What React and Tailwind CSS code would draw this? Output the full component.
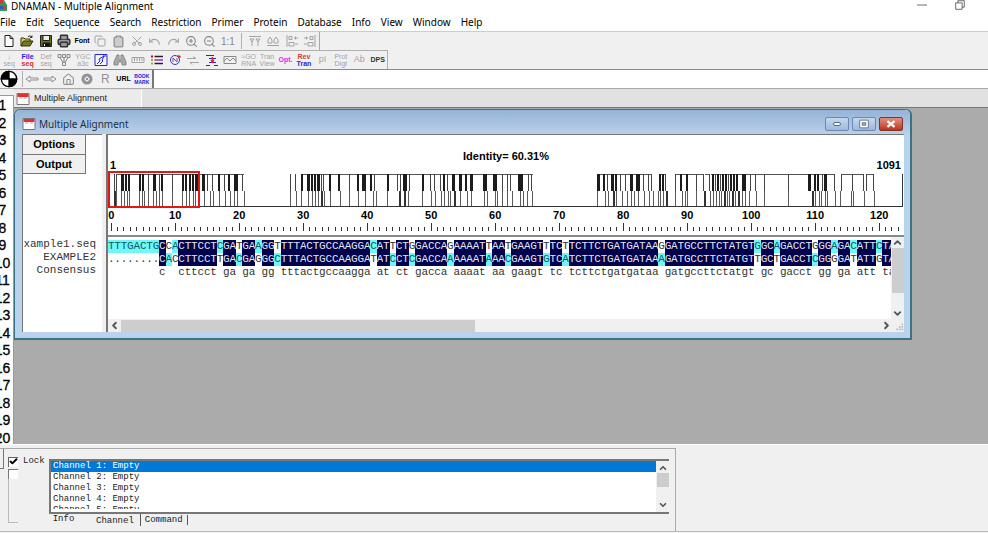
import { Check, ChevronDown, ChevronLeft, ChevronRight, ChevronUp, Clipboard, Copy, House, Printer, Redo, Scissors, Undo, ZoomIn, ZoomOut } from "lucide-react";
import clsx from "clsx";

const menus = ["File", "Edit", "Sequence", "Search", "Restriction", "Primer", "Protein", "Database", "Info", "View", "Window", "Help"]

const seq1 = "TTTGACTGCCACTTCCTCGATGAAGGTTTTACTGCCAAGGACATTCTGGACCAGAAAATTAATGAAGTTTCTTCTTCTGATGATAAGGATGCCTTCTATGTGGCAGACCTGGGAGACATTCTA"
const seq2 = "........CACCTTCCTTGACGAGGGCTTTACTGCCAAGGATATCCTCGACCAAAAAATAAACGAAGTGTCATCTTCTGATGATAAAGATGCCTTCTATGTTGCTGACCTCGGGGATATTGTA"

// runs of the identity profile: [x, width], x counted from the first base
const upper = [
    [6, 1], [8, 1], [13, 3], [17, 2], [20, 2], [31, 2], [34, 2], [40, 1], [45, 3], [51, 1], [53, 2], [64, 1], [74, 2], [77, 2], [81, 2], [84, 2], [87, 3],
    [94, 3], [99, 1], [104, 1], [110, 2], [116, 1], [120, 2], [126, 4], [134, 1], [182, 1], [187, 1], [193, 2], [199, 3], [203, 2], [206, 2], [209, 3],
    [213, 1], [215, 1], [221, 2], [230, 2], [241, 1], [249, 2], [254, 4], [262, 2], [266, 1], [279, 2], [289, 1], [292, 1], [295, 4], [301, 1], [314, 2],
    [322, 1], [326, 1], [332, 1], [335, 2], [339, 1], [344, 3], [351, 3], [357, 2], [362, 3], [375, 4], [385, 4], [394, 1], [399, 1], [402, 1], [410, 5],
    [420, 1], [423, 1], [489, 3], [495, 2], [499, 1], [503, 3], [507, 2], [512, 1], [517, 1], [522, 3], [528, 4], [535, 1], [540, 1], [543, 1], [551, 2],
    [554, 2], [557, 1], [567, 1], [572, 2], [578, 2], [588, 1], [595, 1], [601, 1], [604, 2], [607, 1], [609, 2], [612, 1], [614, 2], [617, 2], [620, 1],
    [622, 2], [625, 2], [628, 2], [634, 4], [642, 1], [647, 1], [656, 1], [680, 1], [700, 3], [706, 2], [709, 2], [714, 1], [716, 3], [726, 1], [733, 1],
    [744, 1], [755, 1], [758, 1], [765, 1],
]
const lower = [
    [6, 2], [8, 1], [13, 1], [16, 1], [19, 1], [21, 1], [31, 1], [34, 1], [36, 1], [40, 1], [45, 1], [48, 1], [51, 1], [54, 1], [64, 1], [74, 1], [78, 1],
    [81, 1], [85, 1], [87, 1], [90, 1], [96, 1], [102, 1], [105, 1], [111, 1], [117, 1], [122, 1], [126, 1], [129, 1], [136, 1], [182, 1], [188, 1],
    [193, 1], [200, 1], [204, 1], [207, 1], [210, 1], [213, 2], [216, 1], [222, 1], [232, 1], [241, 1], [250, 1], [257, 1], [265, 1], [268, 1], [279, 1],
    [291, 2], [296, 2], [300, 1], [314, 1], [323, 1], [327, 1], [333, 1], [336, 1], [340, 1], [342, 1], [346, 2], [352, 1], [359, 1], [363, 1], [376, 1],
    [379, 1], [387, 1], [389, 1], [394, 1], [399, 1], [404, 1], [412, 1], [415, 1], [419, 1], [424, 1], [489, 1], [497, 1], [500, 1], [505, 2], [508, 1],
    [514, 1], [519, 1], [523, 1], [526, 1], [530, 1], [536, 1], [541, 1], [545, 1], [550, 1], [552, 1], [555, 1], [558, 2], [567, 1], [574, 1], [577, 1],
    [579, 1], [588, 1], [596, 2], [602, 1], [605, 1], [608, 1], [611, 1], [613, 1], [616, 2], [619, 1], [621, 1], [624, 2], [627, 1], [630, 2], [634, 1],
    [637, 1], [641, 1], [648, 1], [656, 1], [680, 1], [704, 2], [707, 1], [711, 1], [713, 1], [717, 1], [719, 1], [727, 1], [732, 1], [743, 1], [745, 1],
    [756, 1], [766, 1],
]
const tops = [[8, 90], [92, 136], [193, 425], [489, 543], [551, 558], [567, 595], [597, 601], [603, 642], [642, 700], [703, 726], [733, 744], [745, 755], [758, 766]]

let Icon = ({ children, size = "size-3.5", className = "" }) => (
    <svg viewBox="0 0 14 14" className={clsx(size, "shrink-0", className)} fill="none" stroke="currentColor" strokeWidth="1">
        {children}
    </svg>
)

let Tool = ({ label, children, className = "" }) => (
    <button aria-label={label} className={clsx("flex flex-1 min-w-0 items-center justify-center h-4.5", className)}>
        {children}
    </button>
)

let Stacked = ({ top, bottom, topColor = "", bottomColor = "" }) => (
    <span className="flex flex-col items-center text-[7px] leading-[7px] whitespace-nowrap">
        <span className={topColor}>{top}</span>
        <span className={bottomColor}>{bottom}</span>
    </span>
)

let FileTools = () => (
    <div className="flex items-center h-[18px] w-[320px] border-r border-[#a8a8a8] text-[#a3a3a3]">
        <Tool label="New"><Icon className="text-[#222]"><path d="M3 1.5h5l3 3v8H3zM8 1.5v3h3" fill="#fff" /></Icon></Tool>
        <Tool label="Open">
            <Icon className="text-[#33330a]"><path d="M1 12V4h3l1 1h5v2" fill="#d8d068" /><path d="M1 12l2.5-5H13l-3 5z" fill="#77771c" /><path d="M8 2.5q2-1.500 4 .5M12 1.500V3.500h-2" /></Icon>
        </Tool>
        <Tool label="Save">
            <Icon className="text-[#222]"><path d="M1.500 1.500h11v11h-11z" fill="#6d6d18" /><path d="M4 1.500h6.500v5H4z" fill="#eee" /><path d="M4 9h7v3.500H4z" fill="#111" /><path d="M5.500 10v2" stroke="#eee" /></Icon>
        </Tool>
        <Tool label="Print"><Printer size={14} strokeWidth={2.5} fill="#999" className="text-[#333]" /></Tool>
        <Tool label="Font" className="text-[7px] font-bold text-black">Font</Tool>
        <Tool label="Copy"><Copy size={12} /></Tool>
        <Tool label="Paste"><Clipboard size={13} strokeWidth={2.5} fill="#ccc" className="text-[#929292]" /></Tool>
        <Tool label="Cut"><Scissors size={12} className="-rotate-90" /></Tool>
        <Tool label="Undo"><Undo size={13} /></Tool>
        <Tool label="Redo"><Redo size={13} /></Tool>
        <Tool label="Zoom in"><ZoomIn size={13} className="text-[#888]" /></Tool>
        <Tool label="Zoom out"><ZoomOut size={13} className="text-[#888]" /></Tool>
        <Tool label="Actual size" className="text-[10px] text-[#888]">1:1</Tool>
        <div className="w-px h-4 mx-1 bg-[#b0b0b0]" />
        <Tool label="Align top"><Icon><path d="M1 2.500h12M2 5l2 3 2-3zM8 5l2 3 2-3zM4 8v4M10 8v4" /></Icon></Tool>
        <Tool label="Align bottom"><Icon><path d="M1 11.500h12M2 9h4V6L4 3 2 6zM8 9h4V6l-2-3-2 3z" /></Icon></Tool>
        <Tool label="Align left"><Icon><path d="M2 1v12M4 2.500h3v3H4zM9 4h4M10.500 2.500v3M4 8.500h5v3.500H4zM10 10h3" /></Icon></Tool>
        <Tool label="Align right"><Icon><path d="M12 1v12M7 2.500h3v3H7zM1 4h4M3.500 2.500v3M5 8.500h5v3.500H5zM1 10h3" /></Icon></Tool>
    </div>
)

let SequenceTools = () => (
    <div className="flex items-center h-[19px] w-[388px] border-t border-r border-[#b0b0b0] text-[#a3a3a3]">
        <Tool label="Load sequence"><Stacked top="↓" bottom="seq" /></Tool>
        <Tool label="File sequence"><Stacked top="File" bottom="seq" topColor="text-[#2020e0] font-bold" bottomColor="text-[#e02828] font-bold" /></Tool>
        <Tool label="Define sequence"><Stacked top="Def" bottom="seq" /></Tool>
        <Tool label="Tree"><Icon className="text-[#888]"><path d="M1 1.500h3v3H1zM5.500 1.500h3v3h-3zM10 1.500h3v3h-3zM3 4.500l3 5M7 4.500v5M11 4.500l-3 5M5.500 9.500h3v3h-3z" /></Icon></Tool>
        <Tool label="Code"><Stacked top="YGC" bottom="a3c" /></Tool>
        <Tool label="Plot"><Icon className="text-[#2424d0]"><path d="M1 1.500h12v11H1z" fill="#f4f4ff" /><path d="M3 11l3-3-1-2 5-3-2 4 1 1-3 3M9 3h3" /></Icon></Tool>
        <Tool label="Find"><Icon className="text-[#888]"><path d="M4 2h2v5H8V2h2l3 7v3H9V9H5v3H1V9z" fill="#aaa" /></Icon></Tool>
        <Tool label="Ruler"><Icon><path d="M1 4.500h12v5H1zM3.500 5v3M6 5v3M8.500 5v3M11 5v3" /></Icon></Tool>
        <Tool label="List"><Icon><path d="M4.500 3.500H13" stroke="#222" strokeWidth="1.500" /><path d="M4.500 7H13" stroke="#9a2bc0" strokeWidth="1.500" /><path d="M4.500 10.500H13" stroke="#222" strokeWidth="1.500" /><path d="M1 3.500h2" stroke="#c02" strokeWidth="2" /><path d="M1 7h2M1 10.500h2" stroke="#b8a020" strokeWidth="2" /></Icon></Tool>
        <Tool label="Plasmid"><Icon><circle cx="7" cy="7" r="4.500" stroke="#3a3ab0" /><path d="M5 9V5l4 4V5" stroke="#7050c0" /><path d="M9.500 3l3 1" stroke="#e02828" strokeWidth="2" /></Icon></Tool>
        <Tool label="Compare"><Icon><path d="M1 5.500h9M7 3.500l3 2M4 9.500h9M4 9.500l2 2" /></Icon></Tool>
        <Tool label="Align"><Icon><path d="M1 2.500h8M1 12.500h4M9 12.500h4M4 5.500h7M4 9.500h7" stroke="#2424d0" /><path d="M7.500 4v4M6 7l1.500 2L9 7" stroke="#e02828" strokeWidth="1.500" /></Icon></Tool>
        <Tool label="Trace"><Icon className="text-[#888]"><path d="M1 3.500h12v7H1zM1 8l3-3 3 3 3-3 3 3" /></Icon></Tool>
        <Tool label="RNA"><Stacked top="≈GO" bottom="RNA" /></Tool>
        <Tool label="Translation view"><Stacked top="Tran" bottom="View" /></Tool>
        <Tool label="Optimise" className="text-[7px] font-bold text-[#e828e8]">Opt.</Tool>
        <Tool label="Reverse translate"><Stacked top="Rev" bottom="Tran" topColor="text-[#e03838] font-bold" bottomColor="text-[#2828d0] font-bold" /></Tool>
        <Tool label="pI" className="text-[9px]">pI</Tool>
        <Tool label="Protein digest"><Stacked top="Prot" bottom="Digt" /></Tool>
        <Tool label="Antibody" className="text-[9px]">Ab</Tool>
        <Tool label="DPS" className="text-[7px] font-bold text-[#173d29]">DPS</Tool>
    </div>
)

let AddressBar = () => (
    <div className="flex h-[18px] text-[#929292]">
        <Icon size="size-[18px]" className="text-black"><circle cx="7" cy="7" r="6" fill="#fff" /><path d="M7 7V1a6 6 0 0 0-6 6zM7 7v6a6 6 0 0 0 6-6z" fill="#000" /></Icon>
        <div className="flex items-center w-[134px] pl-1 pr-px">
            <div className="w-px h-4 bg-[#b0b0b0]" />
            <Tool label="Back"><Icon><path d="M1 7l4-3v2h8v2H5v2z" /></Icon></Tool>
            <Tool label="Forward"><Icon><path d="M13 7L9 4v2H1v2h8v2z" /></Icon></Tool>
            <Tool label="Home"><House size={13} /></Tool>
            <Tool label="Stop"><Icon><circle cx="7" cy="7" r="4" strokeWidth="3" /><path d="M5.500 5.500l3 3M8.500 5.500l-3 3" /></Icon></Tool>
            <Tool label="Reload" className="text-[12px]">R</Tool>
            <Tool label="URL" className="text-[7px] font-bold text-black">URL</Tool>
            <Tool label="Bookmark" className="text-[#1818e0] font-bold">
                <span className="flex flex-col items-center text-[5px] leading-[6px]"><span>BOOK</span><span>MARK</span></span>
            </Tool>
        </div>
        <input aria-label="Address" className="flex-1 min-w-0 bg-white border-l-2 border-[#777] outline-none" />
    </div>
)

let DocIcon = () => (
    <Icon size="size-3.5"><path d="M1 1.500h12v11H1z" fill="#fff" stroke="#777" /><path d="M1.500 3.500h11" stroke="#e03030" strokeWidth="3" /><path d="M3 6h3M8 6h3" stroke="#e89090" /></Icon>
)

let Profile = () => (
    <svg viewBox="0 0 797 37" className="block w-[797px] h-[37px] shrink-0" shapeRendering="crispEdges">
        {tops.map(([a, b]) => <rect key={a} x={a} y="3" width={b - a} height="1" fill="#555" />)}
        {upper.map(([x, w]) => <rect key={x} x={x} y="3" width={w} height="17" fill={w > 1 ? "#1c1c1c" : "#444"} />)}
        {lower.map(([x, w]) => <rect key={x} x={x} y="20" width={w} height="15" fill={w > 1 ? "#333" : "#5a5a5a"} />)}
        <rect x="0" y="35" width="795" height="1" fill="#333" />
        <rect x="794" y="3" width="1" height="33" fill="#333" />
        <rect x="1" y="1" width="90" height="35" fill="none" stroke="#e01818" strokeWidth="2" />
    </svg>
)

let Ruler = () => (
    <div className="grid grid-cols-[repeat(125,minmax(0,1fr))] w-[800px] h-[27px] shrink-0">
        {Array.from({ length: 125 }, (_, i) => (
            <div key={i} className="flex flex-col items-center justify-between pt-px pb-1">
                <span className="h-3 text-[11px] leading-3 font-bold whitespace-nowrap">{i % 10 === 0 && i}</span>
                <span className={clsx("w-px bg-[#333]", i % 10 === 0 ? "h-2" : "h-1")} />
            </div>
        ))}
    </div>
)

// identical bases are navy, otherwise the alphabetically first one gets the cyan box
const baseClass = (own, other) => {
    if (own === other) return "bg-[#00004c] text-[#e4e4f0]"
    if (own !== "." && (other === "." || own < other)) return "bg-[#6ff7f7] text-[#0e5c60]"
    return "text-[#333]"
}

let Strand = ({ bases, other }) => (
    <div className="grid grid-cols-[repeat(125,minmax(0,1fr))] w-[800px] h-[13px]">
        {bases.split("").map((b, i) => (
            <span key={i} className={clsx("flex justify-center", other && baseClass(b, other[i]))}>{b}</span>
        ))}
    </div>
)

let AlignmentWindow = () => {
    const consensus = seq1.split("").map((b, i) => b === seq2[i] ? b.toLowerCase() : " ").join("")
    return (
        <section className="flex flex-col w-[898px] h-[231px] pl-[7px] pr-[6px] pb-[6px] border border-b-2 border-r-2 border-[#3d7282] rounded-t-md bg-[#b8d3ec]">
            <header className="flex items-center h-6 shrink-0 gap-[3px] -ml-[7px] -mr-[6px] px-[7px] pt-1 rounded-t-md bg-linear-to-b from-[#94b3d6] to-[#b9d0e9]">
                <DocIcon />
                <h2 className="flex-1 text-[10px] font-['Noto_Sans',sans-serif] text-[#1c2f47]">Multiple Alignment</h2>
                <div className="flex gap-[3px]">
                    <button aria-label="Minimize" className="flex items-center justify-center w-6 h-3.5 border border-[#6c88ac] rounded-xs bg-linear-to-b from-[#c5d8ee] to-[#9bb9dc]"><span className="w-2 h-1 border border-[#5b6a7e] bg-white rounded-xs" /></button>
                    <button aria-label="Restore" className="flex items-center justify-center w-6 h-3.5 border border-[#6c88ac] rounded-xs bg-linear-to-b from-[#c5d8ee] to-[#9bb9dc]"><Icon size="size-3"><path d="M2 2.500h10v9H2z" fill="#fff" stroke="#5b6a7e" /><path d="M5 5.500h4v3H5z" fill="#9bb9dc" stroke="#5b6a7e" /></Icon></button>
                    <button aria-label="Close" className="flex items-center justify-center w-6 h-3.5 border border-[#7c3528] rounded-xs bg-linear-to-b from-[#de8f80] to-[#bd3119]"><Icon size="size-2.5"><path d="M2 3l10 8M12 3L2 11" stroke="#fff" strokeWidth="3" /></Icon></button>
                </div>
            </header>

            <div className="flex flex-1 min-h-0 bg-[#f0f0f0]">
                <aside className="flex flex-col w-20 shrink-0 bg-white border-l border-t border-[#777]">
                    <div className="flex flex-col w-[63px] text-[11px] font-bold">
                        <button className="h-5 bg-[#f0f0f0] border-r border-b border-[#777]">Options</button>
                        <button className="h-[19px] bg-[#f0f0f0] border-r border-b border-[#777]">Output</button>
                    </div>
                    <div className="flex flex-col items-end mt-16 pr-1.5 overflow-hidden text-[11px] leading-[13px] font-['Liberation_Mono',monospace] text-[#333]">
                        <span>example1.seq</span>
                        <span>EXAMPLE2</span>
                        <span>Consensus</span>
                    </div>
                </aside>

                <div className="flex flex-col flex-1 min-w-0 ml-1 border-t border-l-2 border-[#777] bg-white overflow-hidden">
                    <div className="flex flex-col h-[102px] shrink-0 border-b-2 border-[#888] overflow-hidden">
                        <h3 className="h-3 mt-[15px] text-[11px] leading-3 font-bold text-center">Identity= 60.31%</h3>
                        <div className="flex h-[9px] items-end justify-between pl-0.5 pr-[3px] text-[11px] leading-3 font-bold"><span>1</span><span>1091</span></div>
                        <Profile />
                        <Ruler />
                    </div>
                    <div className="flex flex-1 min-h-0">
                        <div className="flex-1 min-w-0 overflow-hidden pt-[3px] text-[11px] leading-[13px] font-['Liberation_Mono',monospace] text-[#333]">
                            <Strand bases={seq1} other={seq2} />
                            <Strand bases={seq2} other={seq1} />
                            <Strand bases={consensus} />
                        </div>
                        <div className="flex flex-col items-center justify-between w-[13px] bg-[#f0f0f0]">
                            <ChevronUp size={11} strokeWidth={4} className="text-[#555]" />
                            <div className="w-3 h-[45px] mb-auto bg-[#cdcdcd]" />
                            <ChevronDown size={11} strokeWidth={4} className="text-[#555]" />
                        </div>
                    </div>
                    <div className="flex items-center h-[13px] shrink-0 bg-[#f0f0f0]">
                        <ChevronLeft size={11} strokeWidth={4} className="mx-px text-[#555]" />
                        <div className="w-[354px] h-3 bg-[#cdcdcd]" />
                        <ChevronRight size={11} strokeWidth={4} className="ml-auto text-[#555]" />
                        <Icon size="size-3" className="text-[#bbb]"><path d="M12 4v9M9 7v6M6 10v3" strokeDasharray="2 1" strokeWidth="2" /></Icon>
                    </div>
                </div>
            </div>
        </section>
    )
}

let OutputPanel = () => (
    <footer className="flex flex-col h-[89px] shrink-0 border-t border-white bg-[#f0f0f0] font-['Liberation_Mono',monospace] text-[9px] text-[#222]">
        <div className="flex w-[676px] h-[83px] mt-[3px] border-t border-r border-[#aaa]">
            <div className="w-1 h-5 mr-1 border-r border-b border-[#777]" />
            <div className="flex flex-col w-[41px] pt-1.5">
                <label className="flex items-center gap-[5px]">
                    <span className="grid size-2.5 shrink-0 place-items-center">
                        <input type="checkbox" defaultChecked className="peer col-start-1 row-start-1 appearance-none size-2.5 border-t border-l border-[#666] bg-white" />
                        <Check size={9} strokeWidth={5} className="col-start-1 row-start-1 text-black pointer-events-none invisible peer-checked:visible" />
                    </span>
                    Lock
                </label>
                <input type="checkbox" aria-label="Hold" className="appearance-none size-2.5 border-t border-l border-[#777] bg-white" />
                <div className="w-2.5 flex-1 mb-2 border-l border-b border-[#bbb]" />
            </div>
            <div className="flex flex-col flex-1 min-w-0 pt-2.5 pr-1.5">
                <div className="flex h-[55px] border-y-2 border-l-2 border-[#777] bg-white">
                    <ul className="flex-1 h-12 overflow-hidden leading-[11px]">
                        {[1, 2, 3, 4, 5].map(n => (
                            <li key={n} className={clsx("px-0.5", n === 1 && "bg-[#0078d7] text-white")}>Channel {n}: Empty</li>
                        ))}
                    </ul>
                    <div className="flex flex-col items-center justify-between w-[13px] py-0.5 bg-[#f0f0f0]">
                        <ChevronUp size={10} strokeWidth={4} className="text-[#555]" />
                        <div className="w-3 h-3.5 mb-auto bg-[#cdcdcd]" />
                        <ChevronDown size={10} strokeWidth={4} className="text-[#555]" />
                    </div>
                </div>
                <nav className="flex items-center h-3">
                    <button className="w-[45px] pr-4">Info</button>
                    <button className="px-0.5 pr-1.5 pt-0.5 border-r border-[#555] leading-[10px]">Channel</button>
                    <button className="px-1 border-r border-[#555] leading-[10px]">Command</button>
                </nav>
            </div>
        </div>
        <div className="border-t border-[#bbb]" />
    </footer>
)

export default function App() {
    return (
        <div className="flex flex-col h-screen overflow-hidden bg-[#f0f0f0] font-['Liberation_Sans',sans-serif] text-black">
            <div className="bg-white border-b border-[#ccc] font-['Noto_Sans',sans-serif] text-[10px]">
                <header className="flex items-start h-[13px] leading-3">
                    <svg viewBox="0 0 7 11" className="w-[7px] h-[11px]"><path d="M0 0h4l3 5v6H0z" fill="#2d9c55" /><path d="M0 0h3v4H0zM3 6h3v3H3z" fill="#d23c3c" /><path d="M0 6h3v3H0z" fill="#2c5db0" /></svg>
                    <h1 className="flex-1 ml-1">DNAMAN - Multiple Alignment</h1>
                    <button aria-label="Minimize" className="mr-7"><Icon size="size-2.5"><path d="M0 7h14" stroke="#333" /></Icon></button>
                    <button aria-label="Restore" className="mr-[23px]"><Icon size="size-2.5"><path d="M1 4h9v9H1zM4 4V1h9v9h-3" stroke="#333" /></Icon></button>
                </header>
                <nav className="flex gap-2.5 h-[18px] leading-[18px]">
                    {menus.map(m => <button key={m}>{m}</button>)}
                </nav>
            </div>

            <div className="flex flex-col">
                <FileTools />
                <SequenceTools />
                <div className="border-t border-[#8a8a8a]" />
                <AddressBar />
            </div>

            <main className="flex flex-1 min-h-0 border-t border-[#aaa]">
                <ol className="flex flex-col justify-between items-center w-[14px] shrink-0 mt-1.5 -mb-0.5 pt-px pr-2 bg-white border-t border-r border-[#999] text-[14px] leading-4 [-webkit-text-stroke:0.3px_black]">
                    {Array.from({ length: 20 }, (_, i) => <li key={i}>{i + 1}</li>)}
                </ol>
                <div className="flex flex-col flex-1 min-w-0">
                    <div className="h-[19px] shrink-0 bg-[#e1e1e1] border-b border-[#777]">
                        <button className="flex items-center gap-1 w-32 h-[17px] mt-px pl-0.5 bg-[#ebebeb] border-r border-white text-[9px] text-[#222]"><DocIcon />Multiple Alignment</button>
                    </div>
                    <div className="flex-1 min-h-0 pt-px bg-[#ababab]">
                        <AlignmentWindow />
                    </div>
                </div>
            </main>

            <OutputPanel />
        </div>
    )
}
